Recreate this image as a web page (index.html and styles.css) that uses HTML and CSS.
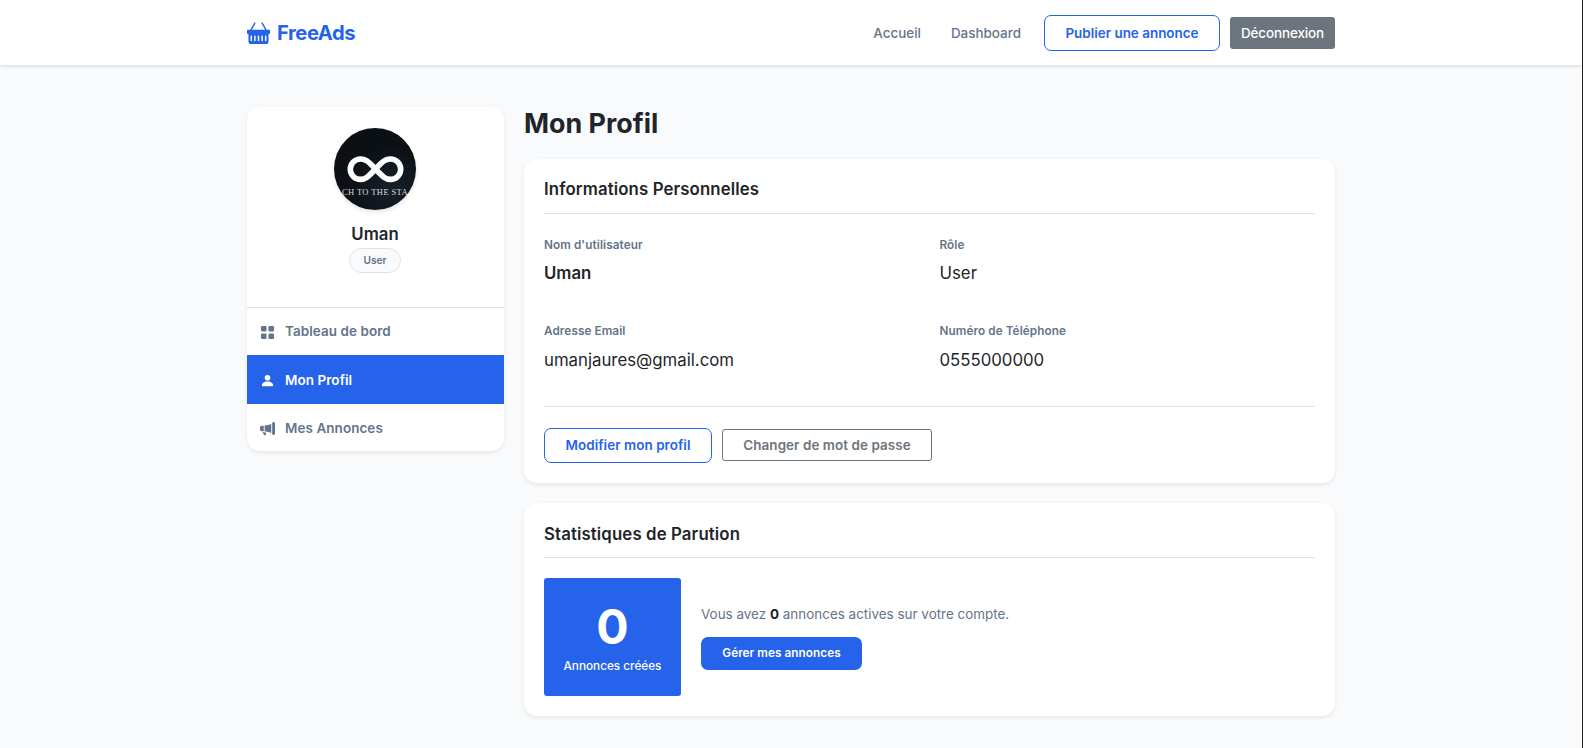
FILE: index.html
```html
<!DOCTYPE html>
<html lang="fr">
<head>
    <meta charset="UTF-8">
    <meta name="viewport" content="width=device-width, initial-scale=1.0">
    <title>Mon Profil - FreeAds</title>
    <link rel="stylesheet" href="styles.css">
</head>
<body>
    <header class="navbar">
        <div class="container navbar-inner">
            <a class="brand" href="#">
                <svg class="brand-icon" viewBox="0 0 16 16" fill="currentColor"><path d="M5.071 1.243a.5.5 0 0 1 .858.514L3.383 6h9.234L10.07 1.757a.5.5 0 1 1 .858-.514L13.783 6H15.5a.5.5 0 0 1 .5.5v2a.5.5 0 0 1-.5.5H15v5a2 2 0 0 1-2 2H3a2 2 0 0 1-2-2V9H.5a.5.5 0 0 1-.5-.5v-2A.5.5 0 0 1 .5 6h1.717zM3.5 10.5a.5.5 0 1 0-1 0v3a.5.5 0 0 0 1 0zm2.5 0a.5.5 0 1 0-1 0v3a.5.5 0 0 0 1 0zm2.5 0a.5.5 0 1 0-1 0v3a.5.5 0 0 0 1 0zm2.5 0a.5.5 0 1 0-1 0v3a.5.5 0 0 0 1 0zm2.5 0a.5.5 0 1 0-1 0v3a.5.5 0 0 0 1 0z"/></svg>
                <span>FreeAds</span>
            </a>
            <nav class="nav">
                <a class="nav-link" href="#">Accueil</a>
                <a class="nav-link" href="#">Dashboard</a>
                <a class="btn btn-outline btn-publish" href="#">Publier une annonce</a>
                <button class="btn btn-logout" type="button">Déconnexion</button>
            </nav>
        </div>
    </header>

    <main class="container layout">
        <aside class="card sidebar">
            <div class="profile">
                <svg class="avatar" viewBox="0 0 82 82">
                    <defs>
                        <radialGradient id="sky" cx="0.68" cy="0.72" r="0.5">
                            <stop offset="0" stop-color="#17212a"/>
                            <stop offset="1" stop-color="#0b1015"/>
                        </radialGradient>
                    </defs>
                    <rect width="82" height="82" fill="url(#sky)"/>
                    <path d="M41.500 41C34 33 31.500 31 26.500 31a10.200 10.200 0 0 0 0 20.400C31.500 51.400 34 49 41.500 41S51.500 31 56.500 31a10.200 10.200 0 0 1 0 20.400C51.500 51.400 49 49 41.500 41z" fill="none" stroke="#fff" stroke-width="5.600"/>
                    <text class="avatar-text" x="41" y="67" text-anchor="middle">CH TO THE STA</text>
                </svg>
                <h5 class="profile-name">Uman</h5>
                <span class="badge">User</span>
            </div>
            <nav class="menu">
                <a class="menu-item" href="#">
                    <svg class="icon" viewBox="0 0 16 16" fill="currentColor"><path d="M1 2.500A1.500 1.500 0 0 1 2.500 1h3A1.500 1.500 0 0 1 7 2.500v3A1.500 1.500 0 0 1 5.500 7h-3A1.500 1.500 0 0 1 1 5.500zm8 0A1.500 1.500 0 0 1 10.500 1h3A1.500 1.500 0 0 1 15 2.500v3A1.500 1.500 0 0 1 13.500 7h-3A1.500 1.500 0 0 1 9 5.500zm-8 8A1.500 1.500 0 0 1 2.500 9h3A1.500 1.500 0 0 1 7 10.500v3A1.500 1.500 0 0 1 5.500 15h-3A1.500 1.500 0 0 1 1 13.500zm8 0A1.500 1.500 0 0 1 10.500 9h3a1.500 1.500 0 0 1 1.500 1.500v3a1.500 1.500 0 0 1-1.500 1.500h-3A1.500 1.500 0 0 1 9 13.500z"/></svg>
                    <span>Tableau de bord</span>
                </a>
                <a class="menu-item active" href="#">
                    <svg class="icon" viewBox="0 0 16 16" fill="currentColor"><path d="M3 14s-1 0-1-1 1-4 6-4 6 3 6 4-1 1-1 1zm5-6a3 3 0 1 0 0-6 3 3 0 0 0 0 6"/></svg>
                    <span>Mon Profil</span>
                </a>
                <a class="menu-item" href="#">
                    <svg class="icon" viewBox="0 0 16 16" fill="currentColor"><path d="M13 2.500a1.500 1.500 0 0 1 3 0v11a1.500 1.500 0 0 1-3 0zm-1 .724c-2.067.95-4.539 1.481-7 1.656v6.237a25 25 0 0 1 1.088.085c2.053.204 4.038.668 5.912 1.560zm-8 7.841V4.934c-.68.027-1.399.043-2.008.053A2.020 2.020 0 0 0 0 7v2c0 1.106.896 1.996 1.994 2.009l.496.008a64 64 0 0 1 1.510.048m1.390 1.081q.428.032.85.078l.253 1.690a1 1 0 0 1-.983 1.187h-.548a1 1 0 0 1-.916-.599l-1.314-2.480a66 66 0 0 1 1.692.064q.491.026.966.060"/></svg>
                    <span>Mes Annonces</span>
                </a>
            </nav>
        </aside>

        <section class="content">
            <h2 class="page-title">Mon Profil</h2>

            <div class="card panel">
                <h5 class="panel-title">Informations Personnelles</h5>
                <div class="info-grid">
                    <div class="info">
                        <span class="info-label">Nom d'utilisateur</span>
                        <p class="info-value strong">Uman</p>
                    </div>
                    <div class="info">
                        <span class="info-label">Rôle</span>
                        <p class="info-value">User</p>
                    </div>
                    <div class="info">
                        <span class="info-label">Adresse Email</span>
                        <p class="info-value">umanjaures@gmail.com</p>
                    </div>
                    <div class="info">
                        <span class="info-label">Numéro de Téléphone</span>
                        <p class="info-value">0555000000</p>
                    </div>
                </div>
                <div class="actions">
                    <a class="btn btn-outline btn-edit" href="#">Modifier mon profil</a>
                    <a class="btn btn-secondary" href="#">Changer de mot de passe</a>
                </div>
            </div>

            <div class="card panel">
                <h5 class="panel-title">Statistiques de Parution</h5>
                <div class="stats">
                    <div class="stat-box">
                        <span class="stat-number">0</span>
                        <span class="stat-label">Annonces créées</span>
                    </div>
                    <div class="stat-info">
                        <p>Vous avez <strong>0</strong> annonces actives sur votre compte.</p>
                        <a class="btn btn-primary" href="#">Gérer mes annonces</a>
                    </div>
                </div>
            </div>
        </section>
    </main>
</body>
</html>
```
FILE: styles.css
```css
* {
    box-sizing: border-box;
}
body {
    margin: 0;
    min-height: 748px;
    font-family: Inter, sans-serif;
    font-size: 13.44px;
    line-height: 1.5;
    color: #212529;
    background-color: #f8fafc;
    border-right: 1px solid #222;
}
h2, h5, p {
    margin: 0;
}
a {
    text-decoration: none;
    color: inherit;
}
.container {
    width: 1088px;
    margin: 0 auto;
}

/* Navbar */
.navbar {
    height: 65px;
    background-color: #fff;
    box-shadow: 0 1px 4px rgba(0, 0, 0, 0.15);
}
.navbar-inner {
    display: flex;
    align-items: center;
    justify-content: space-between;
    height: 66px;
}
.brand {
    display: flex;
    align-items: center;
    gap: 7px;
    color: #2563eb;
    font-size: 20.16px;
    font-weight: 700;
    letter-spacing: -0.42px;
}
.brand-icon {
    width: 23px;
    height: 23px;
}
.nav {
    display: flex;
    align-items: center;
}
.nav-link {
    margin-right: 30px;
    color: #64748b;
    font-weight: 500;
}
.nav-link + .btn {
    margin-left: -7px;
}

/* Buttons */
.btn {
    display: inline-flex;
    align-items: center;
    justify-content: center;
    border: 1px solid transparent;
    font-family: inherit;
    font-size: 13.44px;
    font-weight: 600;
    white-space: nowrap;
}
.btn-outline {
    color: #2563eb;
    border-color: #2563eb;
    border-radius: 7px;
}
.btn-publish {
    width: 176px;
    height: 36px;
}
.btn-logout {
    width: 105px;
    height: 32px;
    margin-left: 10px;
    padding: 0;
    color: #fff;
    background-color: #6c757d;
    border-radius: 3px;
    font-weight: 500;
    letter-spacing: -0.1px;
}
.btn-edit {
    width: 168px;
    height: 35px;
    letter-spacing: 0.06px;
}
.btn-secondary {
    width: 210px;
    height: 32px;
    margin-top: 1px;
    color: #6c757d;
    border-color: #6c757d;
    border-radius: 3px;
    letter-spacing: 0.06px;
}
.btn-primary {
    width: 161px;
    height: 33px;
    color: #fff;
    background-color: #2563eb;
    border-radius: 7px;
    font-size: 11.76px;
    letter-spacing: 0.06px;
}

/* Page layout */
.layout {
    display: grid;
    grid-template-columns: 257px 811px;
    gap: 20px;
    align-items: start;
    padding-top: 42px;
}
.card {
    background-color: #fff;
    border-radius: 13px;
    box-shadow: 0 2px 4px rgba(0, 0, 0, 0.075);
}

/* Sidebar */
.sidebar {
    overflow: hidden;
}
.profile {
    display: flex;
    flex-direction: column;
    align-items: center;
    height: 201px;
    padding: 21px 1px 0 0;
    border-bottom: 1px solid #dee2e6;
}
.avatar {
    width: 82px;
    height: 82px;
    border-radius: 50%;
    box-shadow: 0 2px 4px rgba(0, 0, 0, 0.12);
}
.avatar-text {
    font-family: "Liberation Serif", serif;
    font-size: 8.5px;
    letter-spacing: 0.4px;
    fill: #d5d9dc;
}
.profile-name {
    margin-top: 14px;
    font-size: 16.8px;
    font-weight: 600;
    line-height: 20px;
}
.badge {
    display: flex;
    align-items: center;
    justify-content: center;
    width: 52px;
    height: 25px;
    margin-top: 4px;
    color: #64748b;
    background-color: #f8fafc;
    border: 1px solid #dee2e6;
    border-radius: 13px;
    font-size: 10.08px;
    font-weight: 600;
}
.menu-item {
    display: flex;
    align-items: center;
    gap: 10px;
    height: 47px;
    padding-left: 13px;
    color: #64748b;
    font-weight: 600;
    letter-spacing: 0.08px;
}
.menu-item.active {
    height: 49px;
    color: #fff;
    background-color: #2563eb;
}
.menu-item + .menu-item span {
    padding-top: 2px;
}
.icon {
    width: 15px;
    height: 15px;
    margin-top: 2px;
}

/* Profile content */
.page-title {
    margin-bottom: 20px;
    font-size: 26.88px;
    font-weight: 700;
    line-height: 32px;
}
.panel {
    margin-bottom: 20px;
    padding: 20px;
}
.panel-title {
    height: 35px;
    border-bottom: 1px solid #dee2e6;
    font-size: 16.8px;
    font-weight: 600;
    line-height: 21px;
    letter-spacing: 0.12px;
}
.panel:last-child .panel-title {
    line-height: 23px;
}
.info-grid {
    display: grid;
    grid-template-columns: 1fr 1fr;
    grid-template-rows: 86px 84px;
    column-gap: 20px;
    padding-top: 22px;
}
.info-label {
    display: block;
    color: #64748b;
    font-size: 11.76px;
    font-weight: 600;
    line-height: 18px;
    letter-spacing: 0.08px;
}
.info-value {
    margin-top: 7px;
    font-size: 16.8px;
    line-height: 25px;
}
.info:nth-child(n+3) .info-value {
    margin-top: 8px;
}
.info-value.strong {
    font-weight: 600;
}
.actions {
    display: flex;
    align-items: flex-start;
    gap: 10px;
    padding-top: 21px;
    border-top: 1px solid #dee2e6;
}
.stats {
    display: flex;
    align-items: center;
    gap: 20px;
    padding-top: 20px;
}
.stat-box {
    display: flex;
    flex-direction: column;
    align-items: center;
    width: 137px;
    height: 118px;
    padding-top: 20px;
    color: #fff;
    background-color: #2563eb;
    border-radius: 3px;
}
.stat-number {
    font-size: 48px;
    font-weight: 700;
    line-height: 58px;
}
.stat-label {
    font-size: 11.76px;
    font-weight: 500;
    line-height: 20px;
}
.stat-info p {
    margin-bottom: 13px;
    color: #64748b;
}
.stat-info strong {
    color: #212529;
}
```
